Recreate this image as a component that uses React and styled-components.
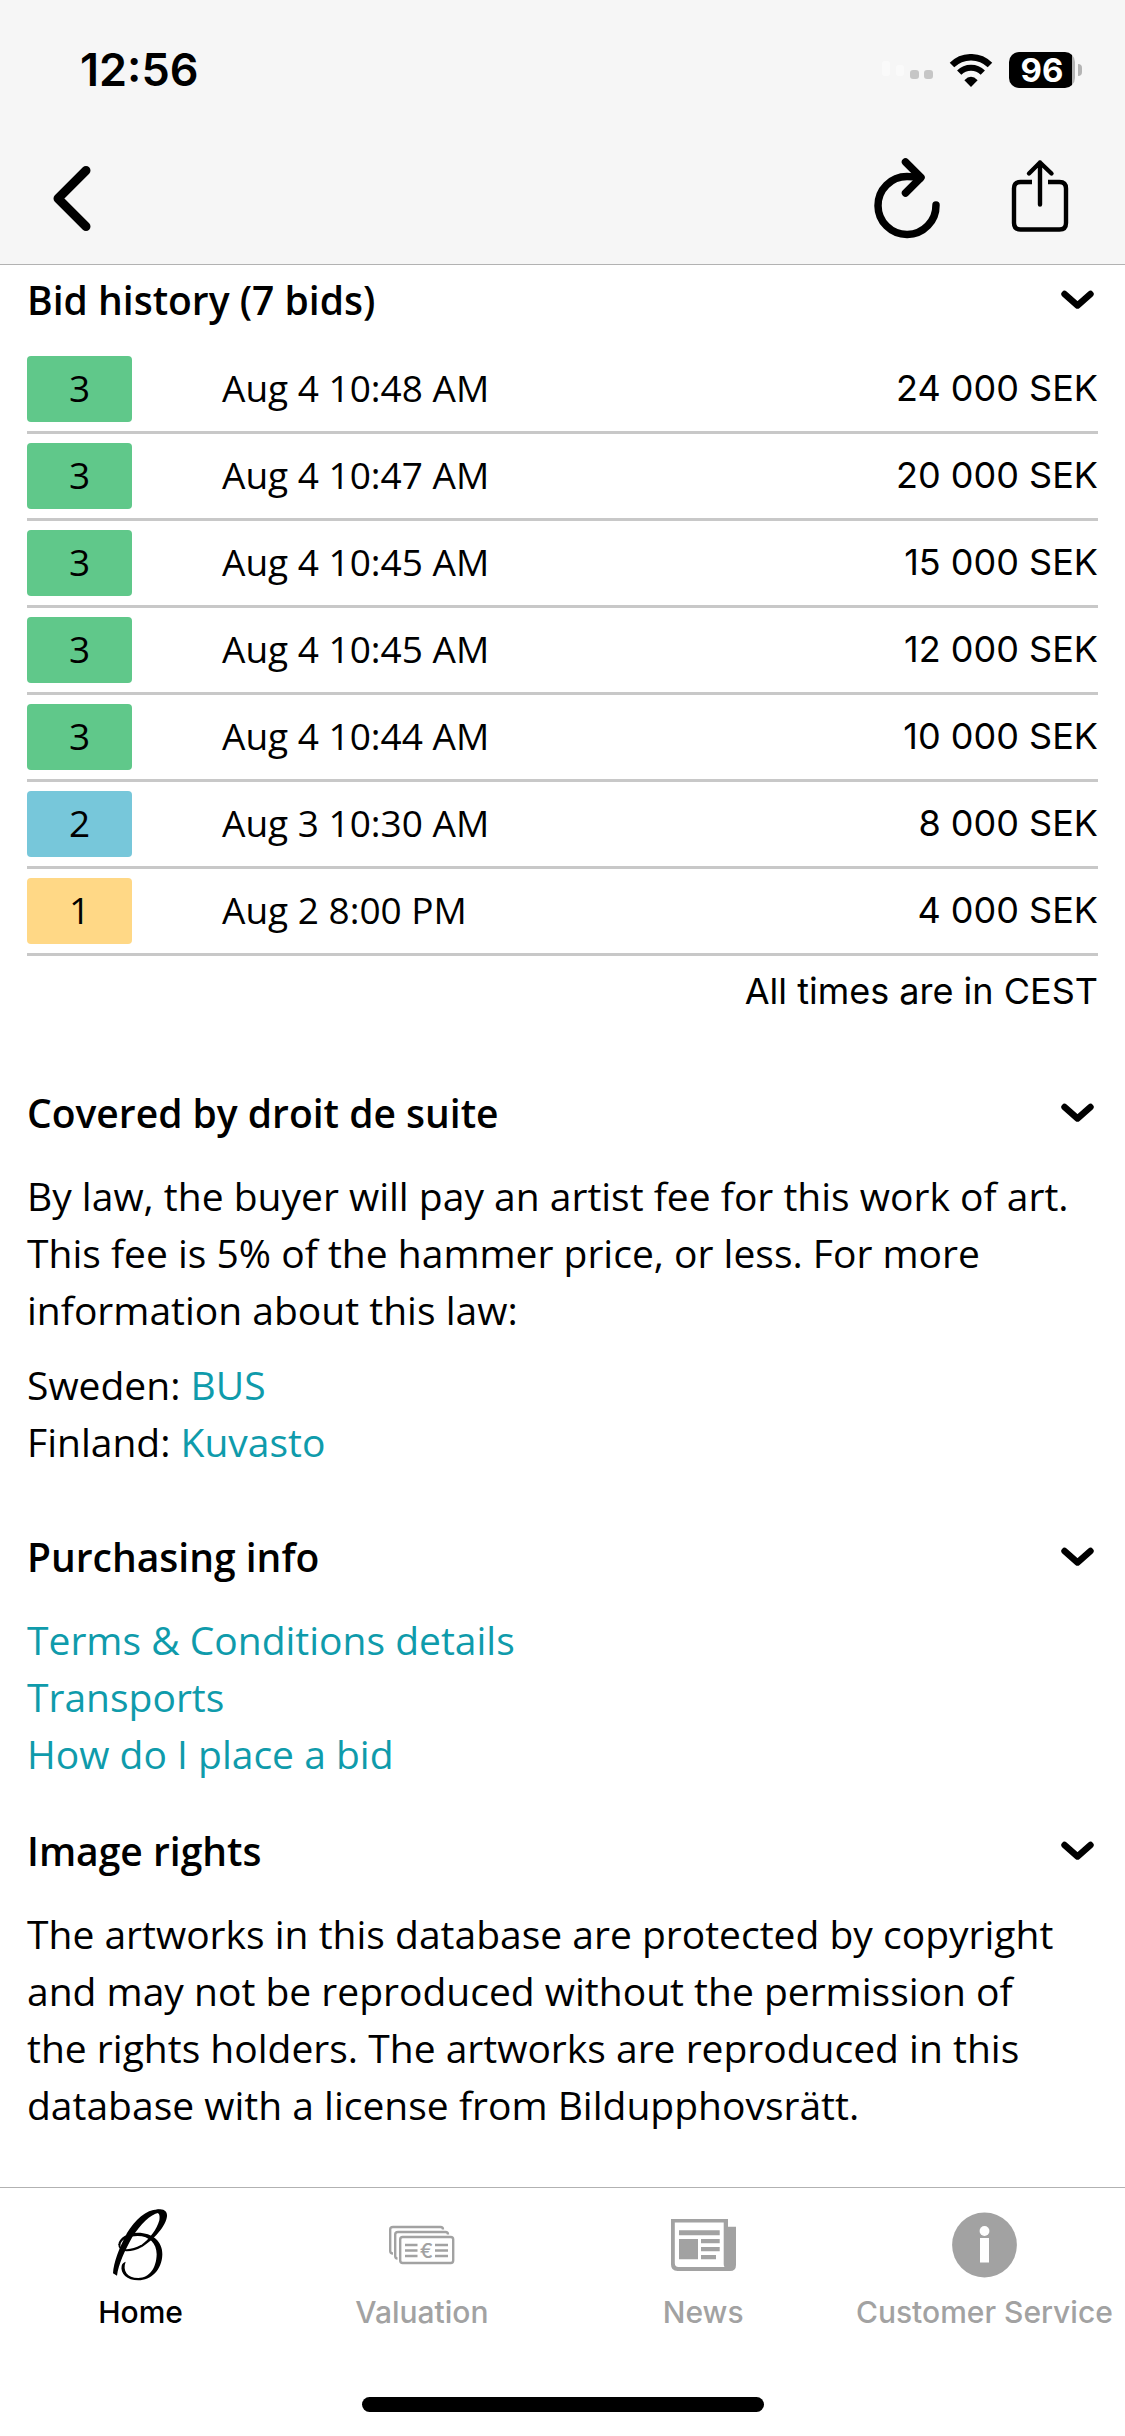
import React from 'react';
import styled, { createGlobalStyle } from 'styled-components';

const GlobalStyle = createGlobalStyle`
  body {
    margin: 0;
    background: #ffffff;
    color: #000000;
    font-family: 'Open Sans', 'Noto Sans', sans-serif;
  }

  button {
    padding: 0;
    border: 0;
    background: none;
    color: inherit;
    font: inherit;
    cursor: pointer;
  }

  svg {
    display: block;
    flex: none;
  }
`;

const Page = styled.div`
  display: flex;
  flex-direction: column;
  min-height: 100vh;
`;

const Header = styled.header`
  background: #f6f6f6;
  border-bottom: 1px solid #b2b2b2;
`;

const StatusBar = styled.div`
  display: flex;
  align-items: center;
  justify-content: space-between;
  padding: 43px 43px 0 80px;
`;

const Clock = styled.time`
  font-family: 'Inter', sans-serif;
  font-size: 45px;
  font-weight: 600;
  line-height: 54px;
`;

const StatusIcons = styled.div`
  display: flex;
  align-items: center;
`;

const Battery = styled.span`
  width: 66px;
  margin-left: 16px;
  border-radius: 10px;
  background: linear-gradient(to right, #000000 63px, #b4b4b4 63px);
  color: #ffffff;
  font-family: 'Inter', sans-serif;
  font-size: 33px;
  font-weight: 700;
  line-height: 36px;
  text-align: center;
`;

const BatteryTip = styled.span`
  width: 4px;
  height: 12px;
  margin-left: 3px;
  border-radius: 0 4px 4px 0;
  background: #b4b4b4;
`;

const NavBar = styled.nav`
  display: flex;
  align-items: center;
  gap: 55px;
  padding: 59px 50px 24px 44px;
`;

const BackButton = styled.button`
  margin-right: auto;
`;

const Main = styled.main`
  flex: 1;
  padding: 6px 27px 53px;
`;

const Section = styled.section`
  margin-bottom: ${(props) => props.$gap || 0}px;
`;

const SectionTitle = styled.h2`
  margin: 0;
  font-size: 39px;
  font-weight: 600;
  line-height: 57px;
`;

const ToggleButton = styled.button`
  display: flex;
  align-items: center;
  justify-content: space-between;
  width: 100%;
  padding-right: 4px;
  text-align: left;
`;

const SectionBody = styled.div`
  margin-top: 26px;
  padding-right: 27px;
  font-size: 39px;
  line-height: 57px;
`;

const Paragraph = styled.p`
  margin: 0 0 ${(props) => props.$gap || 0}px;
`;

const LinkList = styled.ul`
  margin: 0;
  padding: 0;
  list-style: none;
`;

const TextLink = styled.a`
  color: #0f9bab;
  text-decoration: none;
`;

const BidTable = styled.table`
  width: 100%;
  margin-top: 19px;
  border-spacing: 0;
  font-size: 37px;
  line-height: 64px;
`;

const BidCell = styled.td`
  padding: 9px 0;
  border-bottom: 3px solid #c8c8c8;
  vertical-align: top;
`;

const BidderCell = styled(BidCell)`
  width: 195px;
`;

const AmountCell = styled(BidCell)`
  font-family: 'Inter', sans-serif;
  font-size: 36px;
  text-align: right;
`;

const Bidder = styled.span`
  display: block;
  width: 105px;
  height: 66px;
  border-radius: 4px;
  background: ${(props) => props.$color};
  text-align: center;
`;

const TimeZoneNote = styled.p`
  margin: 7px 0 0;
  font-family: 'Inter', sans-serif;
  font-size: 36px;
  line-height: 57px;
  text-align: right;
`;

const Footer = styled.footer`
  border-top: 1px solid #b2b2b2;
`;

const TabBar = styled.nav`
  display: grid;
  grid-template-columns: repeat(4, 1fr);
  padding-top: 17px;
`;

const Tab = styled.a`
  display: flex;
  flex-direction: column;
  align-items: center;
  gap: 9px;
  color: ${(props) => (props.$active ? '#000000' : '#a2a2a2')};
  font-family: 'Inter', sans-serif;
  font-size: 30px;
  font-weight: 500;
  line-height: 36px;
  text-decoration: none;
  white-space: nowrap;
`;

const TabIcon = styled.span`
  display: flex;
  align-items: center;
  height: 80px;
`;

const HomeIndicator = styled.div`
  width: 402px;
  height: 15px;
  margin: 67px auto 24px;
  border-radius: 8px;
  background: #000000;
`;

const SignalIcon = () => (
  <svg width="52" height="18" viewBox="0 0 52 18" aria-hidden="true">
    <rect x="0" y="0" width="8" height="15" rx="3" fill="#fafafa" />
    <rect x="14" y="4" width="8" height="11" rx="3" fill="#fafafa" />
    <rect x="28" y="9" width="9" height="9" rx="3" fill="#c6c6c6" />
    <rect x="42" y="9" width="9" height="9" rx="3" fill="#c6c6c6" />
  </svg>
);

const WifiIcon = styled(({ className }) => (
  <svg className={className} width="44" height="33" viewBox="0 0 44 33" aria-hidden="true">
    <g fill="none" stroke="#000000">
      <path d="M3 11A27 27 0 0 1 41 11" strokeWidth="6.4" />
      <path d="M10.2 18.6A16.6 16.6 0 0 1 33.8 18.6" strokeWidth="6" />
    </g>
    <path d="M22 33L15.4 26.2Q22 19.4 28.6 26.2Z" />
  </svg>
))`
  margin-left: 15px;
`;

const BackIcon = () => (
  <svg width="56" height="84" viewBox="0 0 56 84" aria-hidden="true">
    <path
      d="M42 14.5L14 42.5L42 70.5"
      fill="none"
      stroke="#000000"
      strokeWidth="9"
      strokeLinecap="round"
      strokeLinejoin="round"
    />
  </svg>
);

const RefreshIcon = () => (
  <svg width="84" height="84" viewBox="0 0 84 84" aria-hidden="true">
    <g fill="none" stroke="#000000" strokeWidth="7.5" strokeLinecap="round" strokeLinejoin="round">
      <path d="M70 49A29 29 0 1 1 41 20.5Q48 20.5 54 22" />
      <path d="M39.5 6L55 21.5L39.5 37" />
    </g>
  </svg>
);

const ShareIcon = () => (
  <svg width="70" height="84" viewBox="0 0 70 84" aria-hidden="true">
    <g fill="none" stroke="#000000" strokeWidth="4.4">
      <path d="M27 26H15.5Q9 26 9 32.5V67Q9 73.5 15.5 73.5H54.5Q61 73.5 61 67V32.5Q61 26 54.5 26H43" />
      <path d="M35 48.5V6.5M24 17.5L35 6.5L46.5 17.5" strokeLinecap="round" strokeLinejoin="round" />
    </g>
  </svg>
);

const ChevronIcon = () => (
  <svg width="33" height="20" viewBox="0 0 33 20" aria-hidden="true">
    <path
      d="M3.5 4L16.5 15.5L29.5 4"
      fill="none"
      stroke="#000000"
      strokeWidth="6.4"
      strokeLinecap="round"
      strokeLinejoin="round"
    />
  </svg>
);

const LogoIcon = () => (
  <svg width="80" height="80" viewBox="-10 0 240 240" aria-hidden="true">
    <path d="M38 212L26 205C28 172 44 130 68 84C94 42 130 10 165 14L163 23C138 28 108 58 84 96C62 135 42 178 38 212Z" />
    <path d="M150 17C174 7 190 17 188 34C185 62 150 104 112 127L108 122C136 103 158 72 165 46C168 28 163 21 150 24Z" />
    <path d="M42 120C43 97 72 83 100 83C145 83 175 110 174 148C173 196 140 226 102 226C68 226 47 205 52 182C54 174 60 171 64 170C54 196 68 219 102 219C135 219 156 190 157 148C157 115 135 93 100 93C76 93 50 102 48 120Z" />
    <path d="M45 118C43 142 82 139 111 123" fill="none" stroke="#000000" strokeWidth="6" />
  </svg>
);

const BanknotesIcon = () => (
  <svg width="66" height="40" viewBox="0 0 66 40" aria-hidden="true">
    <g fill="none" stroke="#a2a2a2" strokeWidth="2.4">
      <path d="M4 28.5Q1.2 28.5 1.2 26V4.5Q1.2 2 4 2H51.5Q54 2 54 4.5" />
      <path d="M8.5 33.5Q6.2 33.5 6.2 31V9.5Q6.2 7 9 7H56.5Q59 7 59 9.5" />
      <rect x="11.2" y="12" width="53" height="26" rx="2.5" />
      <path d="M16 20H28.5M16 25.5H28.5M16 31H28.5M46 20H59M46 25.5H59M46 31H59" />
    </g>
    <text x="37.5" y="32.5" textAnchor="middle" fontFamily="Inter, sans-serif" fontSize="20" fontWeight="500" fill="#a2a2a2">
      €
    </text>
  </svg>
);

const NewsIcon = () => (
  <svg width="65" height="52" viewBox="0 0 65 52" fill="#a2a2a2" aria-hidden="true">
    <path
      fillRule="evenodd"
      d="M0 0H57V7.7H65V46Q65 52 59 52H6.5Q0 52 0 45.5ZM3.8 3.5V44Q3.8 48 7.5 48H53.5Q52.7 47 52.7 45V3.5Z"
    />
    <path d="M8 11.3H48.7V16.2H8ZM8 20H27V40.3H8ZM30 20H48.7V24.2H30ZM30 28H48.7V32.2H30ZM30 36H45V40.3H30Z" />
  </svg>
);

const InfoIcon = () => (
  <svg width="65" height="66" viewBox="0 0 65 66" aria-hidden="true">
    <circle cx="32.5" cy="33" r="32.4" fill="#a2a2a2" />
    <circle cx="32.5" cy="19" r="4.9" fill="#ffffff" />
    <rect x="28" y="26" width="9" height="24.5" fill="#ffffff" />
  </svg>
);

const BIDDER_COLORS = {
  1: '#ffd886',
  2: '#77c7da',
  3: '#60c88a',
};

const BIDS = [
  { bidder: 3, time: 'Aug 4 10:48 AM', amount: '24 000 SEK' },
  { bidder: 3, time: 'Aug 4 10:47 AM', amount: '20 000 SEK' },
  { bidder: 3, time: 'Aug 4 10:45 AM', amount: '15 000 SEK' },
  { bidder: 3, time: 'Aug 4 10:45 AM', amount: '12 000 SEK' },
  { bidder: 3, time: 'Aug 4 10:44 AM', amount: '10 000 SEK' },
  { bidder: 2, time: 'Aug 3 10:30 AM', amount: '8 000 SEK' },
  { bidder: 1, time: 'Aug 2 8:00 PM', amount: '4 000 SEK' },
];

const TABS = [
  { label: 'Home', icon: <LogoIcon />, active: true },
  { label: 'Valuation', icon: <BanknotesIcon /> },
  { label: 'News', icon: <NewsIcon /> },
  { label: 'Customer Service', icon: <InfoIcon /> },
];

const SectionHeading = ({ title }) => (
  <SectionTitle>
    <ToggleButton type="button" aria-expanded="true">
      {title}
      <ChevronIcon />
    </ToggleButton>
  </SectionTitle>
);

const App = () => (
  <Page>
    <GlobalStyle />
    <Header>
      <StatusBar>
        <Clock>12:56</Clock>
        <StatusIcons>
          <SignalIcon />
          <WifiIcon />
          <Battery>96</Battery>
          <BatteryTip />
        </StatusIcons>
      </StatusBar>
      <NavBar>
        <BackButton type="button" aria-label="Back">
          <BackIcon />
        </BackButton>
        <button type="button" aria-label="Reload">
          <RefreshIcon />
        </button>
        <button type="button" aria-label="Share">
          <ShareIcon />
        </button>
      </NavBar>
    </Header>

    <Main>
      <Section $gap={64}>
        <SectionHeading title="Bid history (7 bids)" />
        <BidTable>
          <tbody>
            {BIDS.map((bid) => (
              <tr key={bid.amount}>
                <BidderCell>
                  <Bidder $color={BIDDER_COLORS[bid.bidder]}>{bid.bidder}</Bidder>
                </BidderCell>
                <BidCell>{bid.time}</BidCell>
                <AmountCell>{bid.amount}</AmountCell>
              </tr>
            ))}
          </tbody>
        </BidTable>
        <TimeZoneNote>All times are in CEST</TimeZoneNote>
      </Section>

      <Section $gap={58}>
        <SectionHeading title="Covered by droit de suite" />
        <SectionBody>
          <Paragraph $gap={18}>
            By law, the buyer will pay an artist fee for this work of art. This fee is 5% of the
            hammer price, or less. For more information about this law:
          </Paragraph>
          <Paragraph>
            Sweden: <TextLink href="#bus">BUS</TextLink>
            <br />
            Finland: <TextLink href="#kuvasto">Kuvasto</TextLink>
          </Paragraph>
        </SectionBody>
      </Section>

      <Section $gap={40}>
        <SectionHeading title="Purchasing info" />
        <SectionBody>
          <LinkList>
            <li>
              <TextLink href="#terms">Terms & Conditions details</TextLink>
            </li>
            <li>
              <TextLink href="#transports">Transports</TextLink>
            </li>
            <li>
              <TextLink href="#how-to-bid">How do I place a bid</TextLink>
            </li>
          </LinkList>
        </SectionBody>
      </Section>

      <Section>
        <SectionHeading title="Image rights" />
        <SectionBody>
          <Paragraph>
            The artworks in this database are protected by copyright and may not be reproduced
            without the permission of the rights holders. The artworks are reproduced in this
            database with a license from Bildupphovsrätt.
          </Paragraph>
        </SectionBody>
      </Section>
    </Main>

    <Footer>
      <TabBar>
        {TABS.map((tab) => (
          <Tab key={tab.label} href="#" $active={tab.active}>
            <TabIcon>{tab.icon}</TabIcon>
            {tab.label}
          </Tab>
        ))}
      </TabBar>
      <HomeIndicator />
    </Footer>
  </Page>
);

export default App;
